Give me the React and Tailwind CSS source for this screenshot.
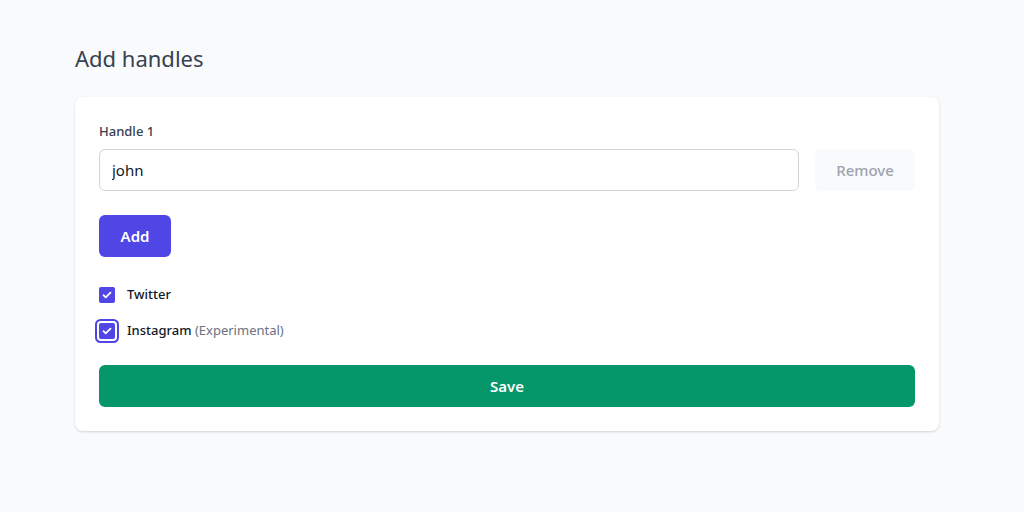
import React, { useState } from "react";

const Check = ({ checked, focused, onChange }) => (
  <button
    type="button"
    onClick={onChange}
    className={`flex h-4 w-4 items-center justify-center rounded-[2px] ${
      checked ? "bg-[#4f46e5]" : "border border-gray-300 bg-white"
    } ${focused ? "ring-2 ring-[#4f46e5] ring-offset-2 ring-offset-white" : ""}`}
  >
    {checked && (
      <svg viewBox="0 0 16 16" className="h-4 w-4" fill="none">
        <path
          d="M4.5 8.2l2.2 2.2 4.8-4.8"
          stroke="white"
          strokeWidth="1.8"
          strokeLinecap="round"
          strokeLinejoin="round"
        />
      </svg>
    )}
  </button>
);

export default function App() {
  const [handles, setHandles] = useState(["john"]);
  const [twitter, setTwitter] = useState(true);
  const [instagram, setInstagram] = useState(true);

  return (
    <div
      className="min-h-[512px] bg-[#f9fafb] pl-[75px] pt-[44px]"
      style={{ fontFamily: '"Noto Sans", "Open Sans", sans-serif' }}
    >
      <h1 className="text-[22px] leading-[28px] text-[#374151]">Add handles</h1>
      <div className="mt-[25px] w-[864px] rounded-lg bg-white px-6 pb-6 pt-[24px] shadow-[0_1px_3px_rgba(0,0,0,0.1),0_1px_2px_rgba(0,0,0,0.06)]">
        {handles.map((h, i) => (
          <div key={i}>
            <label className="block text-[13px] font-medium leading-5 text-[#374151]">
              Handle {i + 1}
            </label>
            <div className="mt-2 flex gap-4">
              <input
                value={h}
                onChange={(e) => {
                  const next = [...handles];
                  next[i] = e.target.value;
                  setHandles(next);
                }}
                className="h-[42px] flex-1 rounded-md border border-[#d1d5db] px-3 text-[15px] text-[#111827] outline-none"
              />
              <button className="h-[42px] w-[100px] rounded-md bg-[#f9fafb] text-[15px] font-medium text-[#9ca3af]">
                Remove
              </button>
            </div>
          </div>
        ))}
        <button
          onClick={() => setHandles([...handles, ""])}
          className="mt-6 h-[42px] w-[72px] rounded-md bg-[#4f46e5] text-[15px] font-semibold text-white"
        >
          Add
        </button>
        <div className="mt-[28px] flex h-5 items-center gap-3">
          <Check checked={twitter} onChange={() => setTwitter(!twitter)} />
          <span className="text-[13px] font-medium text-[#111827]">Twitter</span>
        </div>
        <div className="mt-4 flex h-5 items-center gap-3">
          <Check checked={instagram} focused onChange={() => setInstagram(!instagram)} />
          <span className="text-[13px] font-medium text-[#111827]">
            Instagram <span className="font-normal text-[#6b7280]">(Experimental)</span>
          </span>
        </div>
        <button className="mt-[24px] h-[42px] w-full rounded-md bg-[#059669] text-[15px] font-semibold text-white">
          Save
        </button>
      </div>
    </div>
  );
}
